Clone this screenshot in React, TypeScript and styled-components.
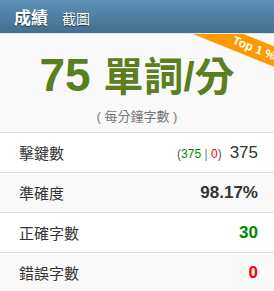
import styled, { createGlobalStyle } from "styled-components";

const GlobalStyle = createGlobalStyle`
  body {
    margin: 0;
    background: #fff;
    font-family: "Liberation Sans", Arial, "Noto Sans CJK TC", sans-serif;
  }
`;

const Panel = styled.div`
  width: 274px;
  height: 291px;
  overflow: hidden;
  background: #fff;
`;

const Header = styled.div`
  height: 33px;
  display: flex;
  align-items: center;
  padding-left: 14px;
  background: linear-gradient(to bottom, #5d8fb8, #41708f);
  border-bottom: 1px solid #e4e4e4;
  color: #fff;
  text-shadow: 0 1px 1px rgba(0, 0, 0, 0.6);
`;

const Title = styled.span`
  font-size: 17px;
  font-weight: bold;
`;

const Snapshot = styled.span`
  font-size: 14px;
  margin-left: 14px;
  margin-top: 2px;
`;

const Summary = styled.div`
  position: relative;
  overflow: hidden;
  height: 98px;
  background: #f9f9f9;
  border-bottom: 1px solid #ddd;
  display: flex;
  flex-direction: column;
  align-items: center;
`;

const Speed = styled.div`
  margin-top: 15px;
  font-size: 46px;
  font-weight: bold;
  line-height: 52px;
  color: #5b7f1f;
  white-space: nowrap;
`;

const Unit = styled.span`
  font-size: 40px;
`;

const Caption = styled.div`
  margin-top: 3px;
  font-size: 13px;
  color: #777;
`;

const Ribbon = styled.div`
  position: absolute;
  top: 5px;
  right: -42px;
  width: 124px;
  height: 19px;
  line-height: 19px;
  background: #f90;
  color: #fff;
  font-size: 12px;
  font-weight: bold;
  text-align: center;
  transform: rotate(22deg);
`;

const Row = styled.div<{ $alt?: boolean }>`
  height: 39px;
  display: flex;
  align-items: center;
  justify-content: space-between;
  padding: 0 16px 0 19px;
  background: ${(p) => (p.$alt ? "#f9f9f9" : "#fff")};
  border-bottom: 1px solid #ddd;
  color: #333;
`;

const Label = styled.span`
  font-size: 15px;
`;

const Value = styled.span<{ $color?: string; $bold?: boolean }>`
  font-size: 17px;
  font-weight: ${(p) => (p.$bold ? "bold" : "normal")};
  color: ${(p) => p.$color || "#333"};
`;

const Detail = styled.span`
  font-size: 12px;
  color: #555;
  margin-right: 8px;
`;

const Part = styled.span<{ $color: string }>`
  color: ${(p) => p.$color};
`;

export default function App() {
  return (
    <>
      <GlobalStyle />
      <Panel>
        <Header>
          <Title>成績</Title>
          <Snapshot>截圖</Snapshot>
        </Header>
        <Summary>
          <Ribbon>Top 1 %</Ribbon>
          <Speed>
            75 <Unit>單詞/分</Unit>
          </Speed>
          <Caption>( 每分鐘字數 )</Caption>
        </Summary>
        <Row>
          <Label>擊鍵數</Label>
          <span>
            <Detail>
              (<Part $color="#080">375</Part> <Part $color="#6a86a8">|</Part>{" "}
              <Part $color="#f00">0</Part>)
            </Detail>
            <Value>375</Value>
          </span>
        </Row>
        <Row $alt>
          <Label>準確度</Label>
          <Value $bold>98.17%</Value>
        </Row>
        <Row>
          <Label>正確字數</Label>
          <Value $bold $color="#080">
            30
          </Value>
        </Row>
        <Row $alt>
          <Label>錯誤字數</Label>
          <Value $bold $color="#f00">
            0
          </Value>
        </Row>
      </Panel>
    </>
  );
}
